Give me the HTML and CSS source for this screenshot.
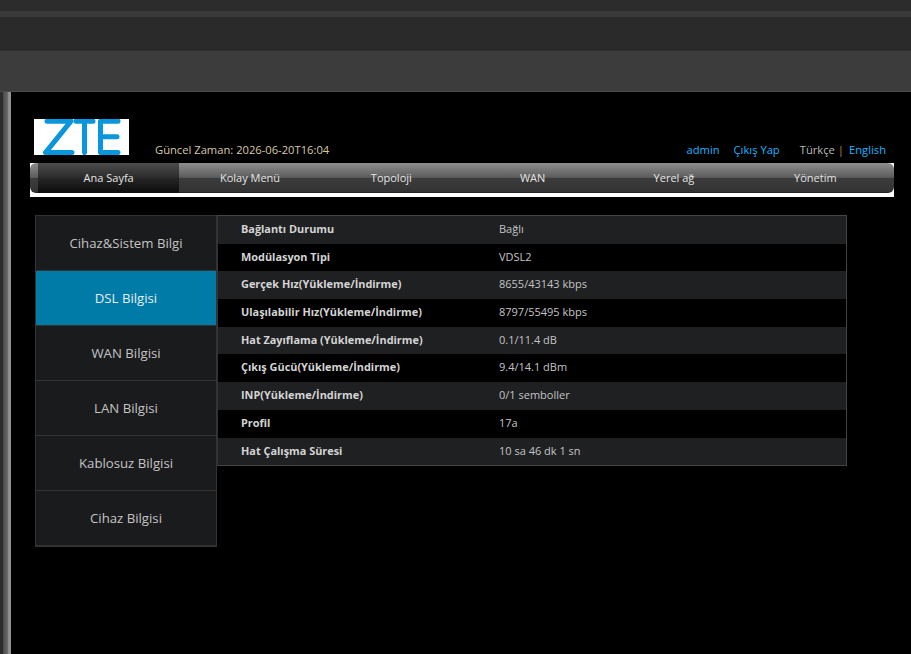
FILE: index.html
```html
<!DOCTYPE html>
<html lang="tr">

<head>
    <meta charset="UTF-8">
    <meta name="viewport" content="width=device-width, initial-scale=1.0">
    <title>ZTE</title>
    <link rel="stylesheet" href="styles.css">
</head>

<body>
    <div class="top-bars">
        <div class="bar-a"></div>
        <div class="bar-b"></div>
        <div class="bar-c"></div>
        <div class="bar-d"></div>
    </div>

    <div class="frame">
        <div class="side-strip"></div>

        <div class="page">
            <div class="header">
                <svg class="logo" viewBox="0 0 95 36" xmlns="http://www.w3.org/2000/svg" role="img" aria-label="ZTE">
                    <rect width="95" height="36" fill="#fff" />
                    <g fill="none" stroke="#0a96dc" stroke-width="5" stroke-linecap="round" stroke-linejoin="round">
                        <path d="M13 2.200H37L11.500 33.600H38" />
                        <path d="M42 2.200H59M50.500 2.200V33.600" />
                        <path d="M84 2.200H66.500V33.600H84M66.500 17.800H83" />
                    </g>
                </svg>
                <span class="clock">Güncel Zaman: 2026-06-20T16:04</span>
                <div class="header-links">
                    <a href="#" class="link user-link">admin</a>
                    <a href="#" class="link logout-link">Çıkış Yap</a>
                    <span class="lang">Türkçe</span>
                    <span class="lang-sep">|</span>
                    <a href="#" class="link">English</a>
                </div>
            </div>

            <div class="nav-wrap">
                <div class="nav">
                    <a href="#" class="nav-item active">Ana Sayfa</a>
                    <a href="#" class="nav-item">Kolay Menü</a>
                    <a href="#" class="nav-item">Topoloji</a>
                    <a href="#" class="nav-item">WAN</a>
                    <a href="#" class="nav-item">Yerel ağ</a>
                    <a href="#" class="nav-item">Yönetim</a>
                </div>
            </div>

            <div class="content">
                <div class="side-menu">
                    <a href="#" class="side-item">Cihaz&amp;Sistem Bilgi</a>
                    <a href="#" class="side-item selected">DSL Bilgisi</a>
                    <a href="#" class="side-item">WAN Bilgisi</a>
                    <a href="#" class="side-item">LAN Bilgisi</a>
                    <a href="#" class="side-item">Kablosuz Bilgisi</a>
                    <a href="#" class="side-item">Cihaz Bilgisi</a>
                </div>

                <div class="info-table">
                    <div class="info-row"><span class="info-label">Bağlantı Durumu</span><span>Bağlı</span></div>
                    <div class="info-row"><span class="info-label">Modülasyon Tipi</span><span>VDSL2</span></div>
                    <div class="info-row"><span class="info-label">Gerçek Hız(Yükleme/İndirme)</span><span>8655/43143 kbps</span></div>
                    <div class="info-row"><span class="info-label">Ulaşılabilir Hız(Yükleme/İndirme)</span><span>8797/55495 kbps</span></div>
                    <div class="info-row"><span class="info-label">Hat Zayıflama (Yükleme/İndirme)</span><span>0.1/11.4 dB</span></div>
                    <div class="info-row"><span class="info-label">Çıkış Gücü(Yükleme/İndirme)</span><span>9.4/14.1 dBm</span></div>
                    <div class="info-row"><span class="info-label">INP(Yükleme/İndirme)</span><span>0/1 semboller</span></div>
                    <div class="info-row"><span class="info-label">Profil</span><span>17a</span></div>
                    <div class="info-row"><span class="info-label">Hat Çalışma Süresi</span><span>10 sa 46 dk 1 sn</span></div>
                </div>
            </div>
        </div>
    </div>
</body>
</html>
```

FILE: styles.css
```css
html, body {
    margin: 0;
    height: 654px;
    overflow: hidden;
    background-color: #000;
}

body {
    font-family: "Open Sans", Arial, sans-serif;
    font-size: 11px;
    color: #c8c8c8;
}

a {
    text-decoration: none;
}

.top-bars {
    height: 91px;
    border-bottom: 1px solid #4a4a4a;
}

.bar-a {
    height: 11px;
    background-color: #2c2c2c;
}

.bar-b {
    height: 6px;
    background-color: #3a3a3a;
}

.bar-c {
    height: 34px;
    background-color: #2a2a2a;
}

.bar-d {
    height: 40px;
    background-color: #3c3c3c;
}

.frame {
    display: flex;
    height: 562px;
}

.side-strip {
    width: 8px;
    margin-left: 3px;
    background: linear-gradient(to right, #4a4a4a 0%, #666 55%, #9a9a9a 75%, #8a8a8a 100%);
    flex-shrink: 0;
    box-shadow: -3px 0 0 #2c2c2c;
}

.page {
    flex: 1;
    padding: 27px 17px 0 19px;
}

.header {
    display: flex;
    align-items: flex-end;
    height: 36px;
    padding-left: 4px;
    padding-right: 8px;
}

.logo {
    width: 95px;
    height: 36px;
    flex-shrink: 0;
}

.clock {
    margin-left: 26px;
    line-height: 11px;
    font-size: 11.200px;
    color: #d8c8a8;
}

.header-links {
    margin-left: auto;
    display: flex;
    line-height: 11px;
    font-size: 11.200px;
}

.link {
    color: #19b5fe;
}

.logout-link {
    margin-left: 14px;
}

.lang {
    margin-left: 20px;
    color: #b8b8b8;
}

.lang-sep {
    margin: 0 5px 0 3px;
    color: #c08a30;
}

.nav-wrap {
    margin-top: 8px;
    background-color: #fff;
    padding-bottom: 4px;
    height: 30px;
}

.nav {
    display: flex;
    height: 30px;
    padding: 0 8px;
    border-radius: 6px;
    background: linear-gradient(to bottom, #8e8e8e 0%, #5c5c5c 48%, #3c3c3c 50%, #333 95%, #1c1c1c 100%);
}

.nav-item {
    flex: 1;
    line-height: 29px;
    text-align: center;
    color: #e4e4e4;
}

.nav-item.active {
    background: linear-gradient(to bottom, #4c4c4c 0%, #2c2c2c 48%, #262626 50%, #0c0c0c 100%);
}

.content {
    display: flex;
    align-items: flex-start;
    margin-top: 18px;
    padding-left: 5px;
}

.side-menu {
    width: 180px;
    border: 1px solid #333;
    border-bottom-width: 2px;
    flex-shrink: 0;
}

.side-item {
    display: block;
    height: 54px;
    line-height: 54px;
    text-align: center;
    font-size: 13.200px;
    color: #c4c4c4;
    background-color: #1a1b1d;
    border-bottom: 1px solid #333;
}

.side-item:last-child {
    border-bottom: none;
}

.side-item.selected {
    background-color: #007aa6;
    color: #e6eef2;
}

.info-table {
    width: 630px;
    border: 1px solid #444;
    border-left: 1px solid #333;
    box-sizing: border-box;
    height: 251px;
}

.info-row {
    display: flex;
    height: 27.700px;
    line-height: 26px;
    padding-left: 23px;
    color: #c4c4c4;
    background-color: #000;
}

.info-row:nth-child(odd) {
    background-color: #1f2022;
}

.info-label {
    width: 258px;
    font-size: 10.900px;
    font-weight: 700;
    color: #d4d4d4;
}
```
